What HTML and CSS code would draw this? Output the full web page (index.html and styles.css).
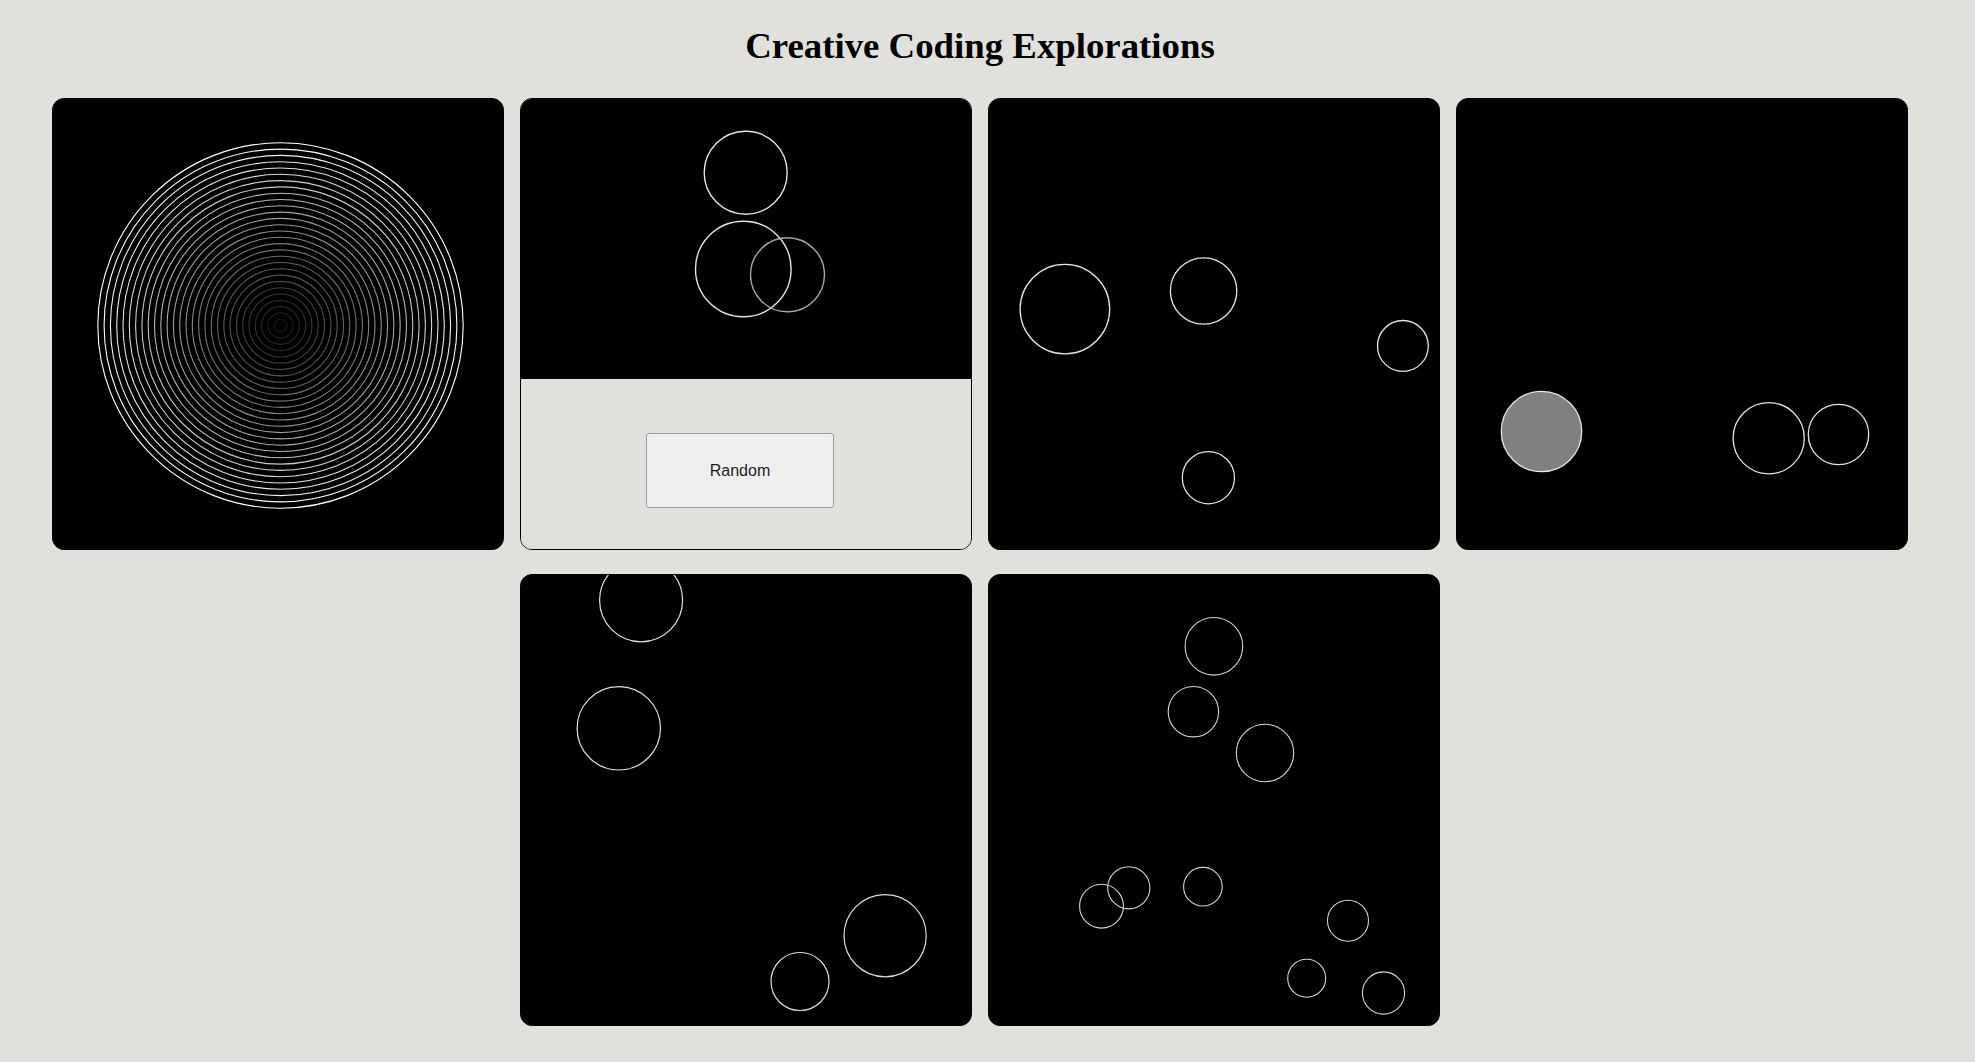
FILE: index.html
```html
<!DOCTYPE html>
<html lang="en">
<head>
<meta charset="utf-8">
<title>Creative Coding Explorations</title>
<link rel="stylesheet" href="styles.css">
</head>
<body>
<div class="page">
  <h1 class="title">Creative Coding Explorations</h1>
  <div class="gallery">
    <div class="card">
      <svg class="canvas" width="450" height="450" viewBox="0 0 450 450">
        <g fill="none" stroke-width="1.1">
          <circle cx="227.5" cy="226.5" r="6.3" stroke="#161616"/>
          <circle cx="227.5" cy="226.5" r="12.6" stroke="#1e1e1e"/>
          <circle cx="227.5" cy="226.5" r="18.9" stroke="#272727"/>
          <circle cx="227.5" cy="226.5" r="25.2" stroke="#2f2f2f"/>
          <circle cx="227.5" cy="226.5" r="31.5" stroke="#373737"/>
          <circle cx="227.5" cy="226.5" r="37.8" stroke="#404040"/>
          <circle cx="227.5" cy="226.5" r="44.1" stroke="#484848"/>
          <circle cx="227.5" cy="226.5" r="50.4" stroke="#515151"/>
          <circle cx="227.5" cy="226.5" r="56.7" stroke="#595959"/>
          <circle cx="227.5" cy="226.5" r="63.0" stroke="#626262"/>
          <circle cx="227.5" cy="226.5" r="69.3" stroke="#6a6a6a"/>
          <circle cx="227.5" cy="226.5" r="75.6" stroke="#727272"/>
          <circle cx="227.5" cy="226.5" r="81.9" stroke="#7b7b7b"/>
          <circle cx="227.5" cy="226.5" r="88.2" stroke="#838383"/>
          <circle cx="227.5" cy="226.5" r="94.5" stroke="#8c8c8c"/>
          <circle cx="227.5" cy="226.5" r="100.8" stroke="#949494"/>
          <circle cx="227.5" cy="226.5" r="107.1" stroke="#9d9d9d"/>
          <circle cx="227.5" cy="226.5" r="113.4" stroke="#a5a5a5"/>
          <circle cx="227.5" cy="226.5" r="119.7" stroke="#adadad"/>
          <circle cx="227.5" cy="226.5" r="126.0" stroke="#b6b6b6"/>
          <circle cx="227.5" cy="226.5" r="132.3" stroke="#bebebe"/>
          <circle cx="227.5" cy="226.5" r="138.6" stroke="#c7c7c7"/>
          <circle cx="227.5" cy="226.5" r="144.9" stroke="#cfcfcf"/>
          <circle cx="227.5" cy="226.5" r="151.2" stroke="#d8d8d8"/>
          <circle cx="227.5" cy="226.5" r="157.5" stroke="#e0e0e0"/>
          <circle cx="227.5" cy="226.5" r="163.8" stroke="#e9e9e9"/>
          <circle cx="227.5" cy="226.5" r="170.1" stroke="#f1f1f1"/>
          <circle cx="227.5" cy="226.5" r="176.4" stroke="#f9f9f9"/>
          <circle cx="227.5" cy="226.5" r="182.7" stroke="#ffffff"/>
        </g>
      </svg>
    </div>

    <div class="card card-controls">
      <svg class="canvas canvas-short" width="450" height="280" viewBox="0 0 450 280">
        <g fill="none" stroke-width="1.4">
          <circle cx="224.7" cy="73.7" r="41.5" stroke="#e4e4e4"/>
          <circle cx="222.3" cy="170" r="47.8" stroke="#e4e4e4"/>
          <circle cx="266.5" cy="175.8" r="37" stroke="#a8a8a8"/>
        </g>
      </svg>
      <div class="controls">
        <button class="btn" type="button">Random</button>
      </div>
    </div>

    <div class="card">
      <svg class="canvas" width="450" height="450" viewBox="0 0 450 450">
        <g fill="none" stroke="#e4e4e4" stroke-width="1.3">
          <circle cx="75.9" cy="210.1" r="44.8"/>
          <circle cx="214.6" cy="192" r="33.2"/>
          <circle cx="413.9" cy="246.9" r="25.4"/>
          <circle cx="219.4" cy="378.7" r="26.1"/>
        </g>
      </svg>
    </div>

    <div class="card">
      <svg class="canvas" width="450" height="450" viewBox="0 0 450 450">
        <g stroke="#e4e4e4" stroke-width="1.3">
          <circle cx="84.5" cy="332.5" r="40.2" fill="#808080"/>
          <circle cx="311.7" cy="339.2" r="35.6" fill="none"/>
          <circle cx="381.5" cy="335.5" r="30.2" fill="none"/>
        </g>
      </svg>
    </div>

    <div class="card">
      <svg class="canvas" width="450" height="450" viewBox="0 0 450 450">
        <g fill="none" stroke="#dedede" stroke-width="1.2">
          <circle cx="120.1" cy="25.3" r="41.5"/>
          <circle cx="97.8" cy="153.3" r="41.7"/>
          <circle cx="364.1" cy="360.7" r="41.1"/>
          <circle cx="279" cy="406.5" r="29"/>
        </g>
      </svg>
    </div>

    <div class="card">
      <svg class="canvas" width="450" height="450" viewBox="0 0 450 450">
        <g fill="none" stroke="#d4d4d4" stroke-width="1.1">
          <circle cx="224.9" cy="71.3" r="28.8"/>
          <circle cx="204.4" cy="136.7" r="25.2"/>
          <circle cx="276" cy="178" r="28.7"/>
          <circle cx="139.8" cy="312.8" r="21.1"/>
          <circle cx="112.5" cy="331.2" r="21.9"/>
          <circle cx="213.9" cy="311.7" r="19.3"/>
          <circle cx="359" cy="345.7" r="20.5"/>
          <circle cx="317.7" cy="403.3" r="19"/>
          <circle cx="394.5" cy="418" r="21.1"/>
        </g>
      </svg>
    </div>
  </div>
</div>
</body>
</html>
```

FILE: styles.css
```css
html, body {
  margin: 0;
  padding: 0;
  background: #e0e0dc;
}

.page {
  width: 1960px;
}

.title {
  margin: 25px 0 0;
  font-family: "Liberation Serif", "Times New Roman", serif;
  font-weight: bold;
  font-size: 36.8px;
  line-height: 42px;
  text-align: center;
  color: #000;
}

.gallery {
  margin-top: 31px;
  display: flex;
  flex-wrap: wrap;
  justify-content: center;
  column-gap: 16px;
  row-gap: 24px;
}

.card {
  width: 452px;
  height: 452px;
  box-sizing: border-box;
  border: 1px solid #000;
  border-radius: 12px;
  background: #000;
  overflow: hidden;
  display: flex;
  flex-direction: column;
}

.canvas {
  display: block;
  flex: none;
  background: #000;
}

.card-controls {
  background: #e0e0dc;
}

.controls {
  flex: 1;
  box-sizing: border-box;
  padding: 54px 0 0 125px;
  background: #e0e0dc;
}

.btn {
  display: block;
  width: 188px;
  height: 75px;
  box-sizing: border-box;
  border: 1px solid #9d9d9d;
  border-radius: 3px;
  background: #efefef;
  color: #1e1e1e;
  font-family: "Liberation Sans", Arial, sans-serif;
  font-size: 16px;
  padding: 0;
  cursor: pointer;
}
```
